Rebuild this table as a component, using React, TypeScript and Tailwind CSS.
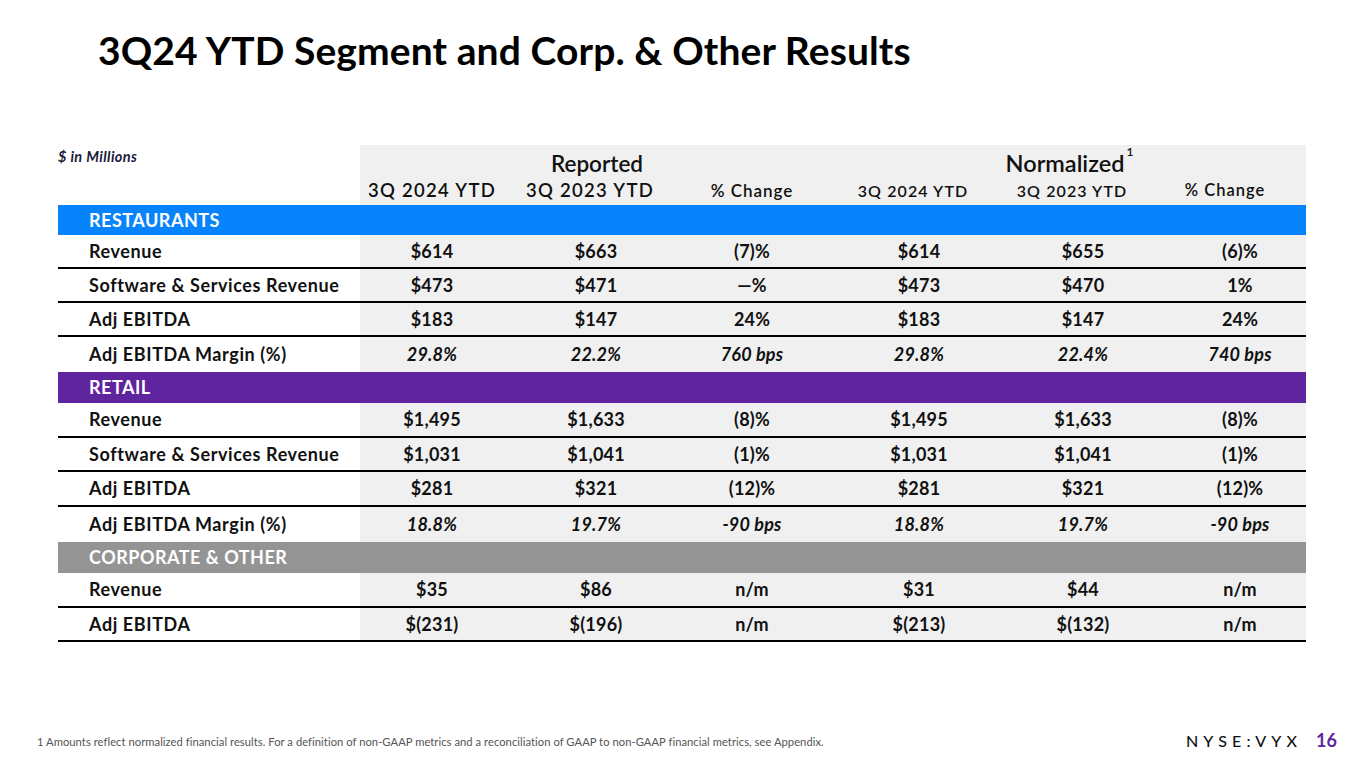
import React from "react";

type Row = { label: string; vals: string[]; italic?: boolean; border: boolean; h: string };
type Section = { name: string; bar: string; barH: string; rows: Row[] };

const sections: Section[] = [
  {
    name: "RESTAURANTS",
    bar: "bg-[#0784fb]",
    barH: "h-[30px]",
    rows: [
      { label: "Revenue", vals: ["$614", "$663", "(7)%", "$614", "$655", "(6)%"], border: true, h: "h-[34px]" },
      { label: "Software & Services Revenue", vals: ["$473", "$471", "—%", "$473", "$470", "1%"], border: true, h: "h-[34px]" },
      { label: "Adj EBITDA", vals: ["$183", "$147", "24%", "$183", "$147", "24%"], border: true, h: "h-[34px]" },
      { label: "Adj EBITDA Margin (%)", vals: ["29.8%", "22.2%", "760 bps", "29.8%", "22.4%", "740 bps"], italic: true, border: false, h: "h-[35px]" },
    ],
  },
  {
    name: "RETAIL",
    bar: "bg-[#5f259f]",
    barH: "h-[31px]",
    rows: [
      { label: "Revenue", vals: ["$1,495", "$1,633", "(8)%", "$1,495", "$1,633", "(8)%"], border: true, h: "h-[35px]" },
      { label: "Software & Services Revenue", vals: ["$1,031", "$1,041", "(1)%", "$1,031", "$1,041", "(1)%"], border: true, h: "h-[34px]" },
      { label: "Adj EBITDA", vals: ["$281", "$321", "(12)%", "$281", "$321", "(12)%"], border: true, h: "h-[35px]" },
      { label: "Adj EBITDA Margin (%)", vals: ["18.8%", "19.7%", "-90 bps", "18.8%", "19.7%", "-90 bps"], italic: true, border: false, h: "h-[35px]" },
    ],
  },
  {
    name: "CORPORATE & OTHER",
    bar: "bg-[#949494]",
    barH: "h-[31px]",
    rows: [
      { label: "Revenue", vals: ["$35", "$86", "n/m", "$31", "$44", "n/m"], border: true, h: "h-[35px]" },
      { label: "Adj EBITDA", vals: ["$(231)", "$(196)", "n/m", "$(213)", "$(132)", "n/m"], border: true, h: "h-[34px]" },
    ],
  },
];

const grid = "grid grid-cols-[302px_144px_184px_128px_206px_122px_162px]";
const valPad = ["", "", "", "", "", "pl-[30px]"];

export default function App() {
  return (
    <div className="w-[1365px] h-[768px] bg-white relative overflow-hidden font-['Lato','Liberation_Sans',sans-serif] text-[#111]">
      <div className="pl-[98px] pt-[26px] h-[145px]">
        <h1 className="text-[39px] font-bold leading-[48px] tracking-[0.1px] text-black">
          3Q24 YTD Segment and Corp. &amp; Other Results
        </h1>
      </div>

      <div className="ml-[58px] w-[1248px]">
        {/* header */}
        <div className={`${grid} h-[60px]`}>
          <div className="bg-white mt-[-1px]">
            <span className="text-[14.5px] font-bold italic tracking-[0.4px] text-[#1b1b3a]">$ in Millions</span>
          </div>
          <div className="col-span-6 bg-[#f0f0f0] grid grid-cols-[144px_184px_128px_206px_122px_162px] grid-rows-[31px_29px] whitespace-nowrap">
            <div className="col-span-3 flex items-end justify-center pl-[18px] text-[22.5px] font-semibold leading-none pb-[1px]">
              Reported
            </div>
            <div className="col-span-3 flex items-end justify-center pl-[8px] text-[23.5px] font-semibold leading-none pb-[1px]">
              <span className="relative">
                Normalized
                <span className="absolute left-full top-[-6px] ml-[2px] text-[12px] font-semibold">1</span>
              </span>
            </div>
            <div className="flex items-center justify-center text-[18.5px] tracking-[1.3px] font-semibold">3Q 2024 YTD</div>
            <div className="flex items-center justify-center pr-[12px] text-[18.5px] tracking-[1.3px] font-semibold">3Q 2023 YTD</div>
            <div className="flex items-center justify-center text-[17px] tracking-[1px] font-semibold">% Change</div>
            <div className="flex items-center justify-center pr-[12px] text-[16px] tracking-[1.1px] font-semibold">3Q 2024 YTD</div>
            <div className="flex items-center justify-center pr-[22px] text-[16px] tracking-[1.1px] font-semibold">3Q 2023 YTD</div>
            <div className="flex items-center justify-center text-[16.5px] tracking-[1px] font-semibold">% Change</div>
          </div>
        </div>

        {sections.map((s) => (
          <div key={s.name}>
            <div className={`${s.bar} ${s.barH} flex items-center pl-[31px] text-white text-[18px] font-bold tracking-[0.5px]`}>
              {s.name}
            </div>
            {s.rows.map((r, i) => (
              <div
                key={i}
                className={`${grid} ${r.h} ${r.border ? "border-b-2 border-black" : ""}`}
              >
                <div className="bg-white flex items-center pl-[31px] text-[18px] tracking-[0.6px] font-bold whitespace-nowrap">
                  {r.label}
                </div>
                {r.vals.map((v, j) => (
                  <div
                    key={j}
                    className={`bg-[#f0f0f0] flex items-center justify-center whitespace-nowrap text-[18px] tracking-[0.2px] font-bold ${valPad[j]} ${r.italic ? "italic" : ""}`}
                  >
                    {v}
                  </div>
                ))}
              </div>
            ))}
          </div>
        ))}
      </div>

      <div className="absolute left-[37px] top-[734px] text-[11.2px] tracking-[0.05px] text-[#555] whitespace-nowrap">
        1 Amounts reflect normalized financial results. For a definition of non-GAAP metrics and a reconciliation of GAAP to non-GAAP financial metrics, see Appendix.
      </div>
      <div className="absolute left-[1186px] top-[727px] flex items-center">
        <span className="text-[16px] font-medium tracking-[0.32em] text-[#111]">NYSE:VYX</span>
        <span className="ml-[14px] text-[18px] font-bold text-[#5f259f]">16</span>
      </div>
    </div>
  );
}
